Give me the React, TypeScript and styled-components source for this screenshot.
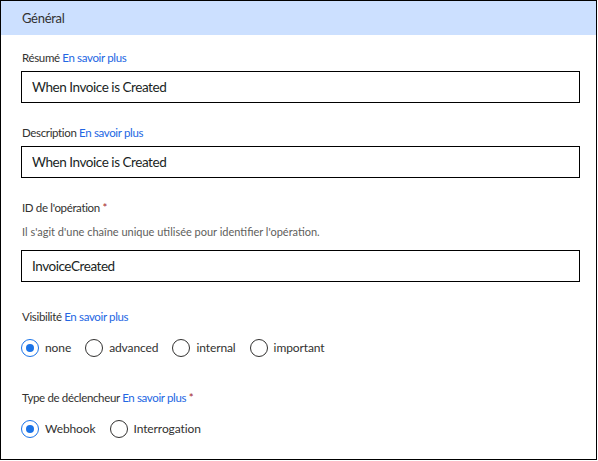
import styled, { createGlobalStyle } from "styled-components";

const GlobalStyle = createGlobalStyle`
  html, body {
    margin: 0;
    padding: 0;
    background: #ffffff;
  }
  body {
    font-family: Lato, "Open Sans", "Liberation Sans", sans-serif;
    color: #323130;
  }
`;

interface RadioOption {
  value: string;
  label: string;
}

const visibilityOptions: RadioOption[] = [
  { value: "none", label: "none" },
  { value: "advanced", label: "advanced" },
  { value: "internal", label: "internal" },
  { value: "important", label: "important" },
];

const triggerOptions: RadioOption[] = [
  { value: "webhook", label: "Webhook" },
  { value: "polling", label: "Interrogation" },
];

interface RadioGroupProps {
  name: string;
  options: RadioOption[];
  selected: string;
}

function RadioGroup({ name, options, selected }: RadioGroupProps) {
  return (
    <RadioRow role="radiogroup" aria-label={name}>
      {options.map((option) => (
        <RadioItem key={option.value}>
          <RadioCircle $checked={option.value === selected} />
          <RadioText>{option.label}</RadioText>
        </RadioItem>
      ))}
    </RadioRow>
  );
}

function LearnMore() {
  return <LinkText href="#">En savoir plus</LinkText>;
}

export default function App() {
  return (
    <>
      <GlobalStyle />
      <Panel>
        <Header>Général</Header>
        <Body>
          <Field $space={15}>
            <Label>
              Résumé <LearnMore />
            </Label>
            <TextInput defaultValue="When Invoice is Created" />
          </Field>

          <Field $space={22}>
            <Label>
              Description <LearnMore />
            </Label>
            <TextInput defaultValue="When Invoice is Created" />
          </Field>

          <Field $space={22}>
            <Label>
              ID de l'opération <Required>*</Required>
            </Label>
            <Hint>
              Il s'agit d'une chaîne unique utilisée pour identifier
              l'opération.
            </Hint>
            <TextInput defaultValue="InvoiceCreated" />
          </Field>

          <Field $space={27}>
            <Label>
              Visibilité <LearnMore />
            </Label>
            <RadioGroup
              name="visibility"
              options={visibilityOptions}
              selected="none"
            />
          </Field>

          <Field $space={32}>
            <Label>
              Type de déclencheur <LearnMore /> <Required>*</Required>
            </Label>
            <RadioGroup
              name="trigger"
              options={triggerOptions}
              selected="webhook"
            />
          </Field>
        </Body>
      </Panel>
    </>
  );
}

const Panel = styled.section`
  box-sizing: border-box;
  width: 597px;
  height: 460px;
  border: 1px solid #000000;
  background: #ffffff;
  display: flex;
  flex-direction: column;
`;

const Header = styled.h2`
  margin: 0;
  height: 33px;
  display: flex;
  align-items: center;
  padding: 0 20px 1px 21px;
  background: #cce0ff;
  font-size: 13px;
  letter-spacing: -0.3px;
  line-height: 18px;
  font-weight: 400;
  color: #323130;
`;

const Body = styled.div`
  display: flex;
  flex-direction: column;
  padding: 0 16px 0 20px;
`;

const Field = styled.div<{ $space: number }>`
  display: flex;
  flex-direction: column;
  margin-top: ${(p) => p.$space}px;
`;

const Label = styled.label`
  font-size: 11.5px;
  letter-spacing: -0.35px;
  line-height: 16px;
  color: #323130;
  margin-bottom: 5px;
  padding-left: 1px;
`;

const LinkText = styled.a`
  color: #2266e3;
  text-decoration: none;
`;

const Required = styled.span`
  color: #a4262c;
`;

const Hint = styled.p`
  margin: 3px 0 10px;
  padding-left: 1px;
  font-size: 11px;
  line-height: 16px;
  color: #605e5c;
`;

const TextInput = styled.input`
  box-sizing: border-box;
  width: 100%;
  height: 32px;
  margin: 0;
  padding: 0 10px;
  border: 1px solid #000000;
  border-radius: 0;
  outline: none;
  font-family: inherit;
  font-size: 13.5px;
  letter-spacing: -0.45px;
  color: #201f1e;
  background: #ffffff;
`;

const RadioRow = styled.div`
  display: flex;
  align-items: center;
  gap: 14px;
  margin-top: 8px;
`;

const RadioItem = styled.div`
  display: flex;
  align-items: center;
  gap: 6px;
  height: 20px;
`;

const RadioCircle = styled.span<{ $checked: boolean }>`
  box-sizing: border-box;
  width: 18px;
  height: 18px;
  border-radius: 50%;
  border: 1.5px solid ${(p) => (p.$checked ? "#1a73e8" : "#323130")};
  display: flex;
  align-items: center;
  justify-content: center;

  &::after {
    content: "";
    width: 8px;
    height: 8px;
    border-radius: 50%;
    background: #1a73e8;
    display: ${(p) => (p.$checked ? "block" : "none")};
  }
`;

const RadioText = styled.span`
  font-size: 12px;
  letter-spacing: -0.1px;
  line-height: 18px;
  color: #323130;
`;
